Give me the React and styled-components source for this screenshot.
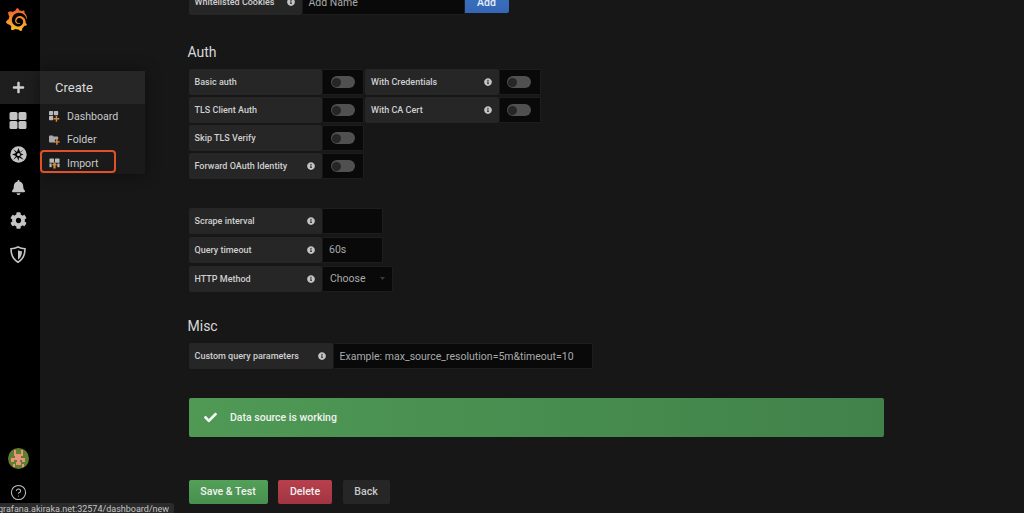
import * as React from "react";
import styled, { createGlobalStyle } from "styled-components";
import { SiGrafana } from "react-icons/si";
import { FaBell, FaCheck, FaCog, FaInfoCircle, FaPlus } from "react-icons/fa";
import { CircleHelp } from "lucide-react";

const GlobalStyle = createGlobalStyle`
	html, body {
		margin: 0;
		height: 100%;
		background: #171717;
		overflow: hidden;
	}
	body {
		font-family: Roboto, "Liberation Sans", sans-serif;
		color: #d8d9da;
	}
`;

const Page = styled.div`
	position: relative;
	display: flex;
	width: 1024px;
	height: 513px;
	overflow: hidden;
`;

const Sidebar = styled.nav`
	flex: 0 0 40px;
	display: flex;
	flex-direction: column;
	align-items: stretch;
	padding-bottom: 4px;
	box-sizing: border-box;
	background: #000;
	color: #c4c4c5;
`;

const LogoSlot = styled.div`
	display: flex;
	justify-content: center;
	height: 71px;
	padding: 8px 8px 0 0;
	box-sizing: border-box;
`;

const NavItem = styled.div`
	display: flex;
	align-items: center;
	justify-content: center;
	height: ${(p) => p.$height || 33.4}px;
	padding-right: 4px;
	background: ${(p) => (p.$active ? "#1e1e1e" : "transparent")};
	color: ${(p) => (p.$active ? "#d0d0d0" : "#c4c4c5")};
`;

const SidebarSpacer = styled.div`
	flex: 1;
`;

const Flyout = styled.div`
	position: absolute;
	left: 40px;
	top: 71px;
	width: 105px;
	height: 103px;
	background: #1a1a1a;
	box-shadow: 0 0 14px rgba(0, 0, 0, 0.45);
`;

const FlyoutHeader = styled.div`
	display: flex;
	align-items: center;
	height: 33px;
	padding-left: 15px;
	background: #262626;
	font-size: 13px;
	color: #d8d9da;
`;

const FlyoutList = styled.div`
	display: flex;
	flex-direction: column;
	padding-top: 1px;
`;

const FlyoutItem = styled.div`
	display: flex;
	align-items: center;
	gap: 7px;
	height: 23.3px;
	padding-left: 9px;
	font-size: 10.6px;
	color: #c8c9ca;
`;

const Highlight = styled.div`
	position: absolute;
	left: 40px;
	top: 150px;
	width: 76px;
	height: 23px;
	box-sizing: border-box;
	border: 2px solid #e0512a;
	border-radius: 4px;
`;

const Main = styled.main`
	flex: 1;
	min-width: 0;
	padding: 0 0 0 148.5px;
`;

const Row = styled.div`
	display: flex;
	gap: 1px;
	height: 26px;
	margin-bottom: ${(p) => p.$pitch ?? 2}px;
`;

const TopRow = styled(Row)`
	margin-top: -11px;
`;

const Label = styled.div`
	display: flex;
	align-items: center;
	justify-content: space-between;
	box-sizing: border-box;
	width: ${(p) => p.$width || 133.5}px;
	padding: 0 6px;
	background: #262626;
	border-radius: 2px;
	font-size: 9px;
	font-weight: 500;
	color: #cfd0d1;
	white-space: nowrap;
`;

const InfoIcon = styled(FaInfoCircle)`
	width: 8px;
	height: 8px;
	margin-right: 1px;
	color: #c4c4c5;
`;

const Field = styled.div`
	display: flex;
	align-items: center;
	justify-content: space-between;
	box-sizing: border-box;
	width: ${(p) => p.$width}px;
	padding: 0 ${(p) => p.$pad ?? 6}px;
	background: #090909;
	border: 1px solid #1e1e1e;
	border-left: 0;
	border-radius: 0 2px 2px 0;
	font-size: 10.5px;
	color: #a8a9aa;
	white-space: nowrap;
`;

const ToggleCell = styled.div`
	display: flex;
	align-items: center;
	justify-content: center;
	width: 41px;
	padding-right: ${(p) => p.$inset || 1}px;
	box-sizing: border-box;
	background: #090909;
	border: 1px solid #1e1e1e;
	border-left: 0;
	border-radius: 0 2px 2px 0;
`;

const ToggleTrack = styled.div`
	display: flex;
	align-items: center;
	width: 24px;
	height: 12px;
	padding: 0 1.5px;
	box-sizing: border-box;
	border-radius: 6px;
	background: #505050;
`;

const ToggleKnob = styled.div`
	width: 9px;
	height: 9px;
	border-radius: 50%;
	background: #262626;
`;

const AddButton = styled.button`
	width: 44px;
	height: 24px;
	margin-left: -1px;
	padding: 2px 0 0;
	border: 0;
	border-radius: 0 2px 2px 0;
	background: linear-gradient(#3c73c4, #3467b5);
	font: 500 10.5px Roboto, sans-serif;
	color: #e8eefa;
`;

const Heading = styled.h3`
	margin: ${(p) => p.$top}px 0 ${(p) => p.$bottom}px -1px;
	font-size: 14px;
	font-weight: 400;
	line-height: 17px;
	color: #d8d9da;
`;

const Group = styled.div`
	margin-top: ${(p) => p.$top}px;
`;

const Alert = styled.div`
	display: flex;
	align-items: center;
	gap: 13.5px;
	box-sizing: border-box;
	width: 695px;
	height: 39px;
	margin-top: 28.5px;
	padding-left: 15px;
	border-radius: 2px;
	background: linear-gradient(90deg, #4f9955, #41824a);
	font-size: 10.5px;
	font-weight: 500;
	color: #f0f2f0;
`;

const Buttons = styled.div`
	display: flex;
	gap: 10.5px;
	margin-top: 43px;
`;

const ActionButton = styled.button`
	width: ${(p) => p.$width}px;
	height: 24px;
	padding: 0;
	border: 0;
	border-radius: 2px;
	background: ${(p) => p.$bg};
	font: 500 10.6px Roboto, sans-serif;
	color: ${(p) => p.$color || "#f2f2f2"};
`;

const StatusBar = styled.div`
	position: absolute;
	left: 0;
	bottom: 0;
	width: 174px;
	height: 10px;
	overflow: hidden;
	background: #2b2b2b;
	border-radius: 0 3px 0 0;
	font-size: 9px;
	line-height: 12px;
	white-space: nowrap;
	color: #c4c4c5;
`;

const StatusText = styled.span`
	display: block;
	margin-left: -2px;
`;

const GridIcon = () => (
	<svg width="18" height="17" viewBox="0 0 18 17" fill="currentColor">
		<rect x="0.5" y="0" width="8" height="8" rx="1.6" />
		<rect x="9.5" y="0" width="8" height="8" rx="1.6" />
		<rect x="0.5" y="9" width="8" height="8" rx="1.6" />
		<rect x="9.5" y="9" width="8" height="8" rx="1.6" />
	</svg>
);

const CompassIcon = () => (
	<svg width="17" height="17" viewBox="0 0 17 17">
		<circle cx="8.5" cy="8.5" r="8.2" fill="currentColor" />
		<path
			d="M13.8 3.2L10 7l3.4 1.5L10 10l3.8 3.8L9 11.5 8.5 15 7 11 3.2 13.8 6 10 2 8.5 6 7 3.2 3.2 7 6l1.5-4L10 6z"
			fill="#000"
		/>
		<circle cx="8.5" cy="8.5" r="1.6" fill="currentColor" />
	</svg>
);

const ShieldIcon = () => (
	<svg width="16" height="17" viewBox="0 0 16 17" fill="none">
		<path
			d="M8 1C5.6 2.2 3.4 2.7 1 2.8c0 5.6 1.8 10.4 7 13.4 5.2-3 7-7.8 7-13.4C12.6 2.7 10.4 2.2 8 1z"
			stroke="currentColor"
			strokeWidth="1.6"
		/>
		<path d="M8 4.2c1.3.6 2.6.9 4 1 0 3.4-1 6.4-4 8.4z" fill="currentColor" />
	</svg>
);

const DashboardGlyph = () => (
	<svg width="11" height="11" viewBox="0 0 12 12">
		<rect x="0" y="0" width="4.6" height="4.6" rx="0.8" fill="#b9b9b9" />
		<rect x="5.4" y="0" width="4.6" height="4.6" rx="0.8" fill="#b9b9b9" />
		<rect x="0" y="5.4" width="4.6" height="4.6" rx="0.8" fill="#b9b9b9" />
		<path d="M7.3 5.5h1.6v2.2h2.3v1.6H8.9v2.4H7.3V9.3H5V7.7h2.3z" fill="#d98a3a" />
	</svg>
);

const FolderGlyph = () => (
	<svg width="11" height="11" viewBox="0 0 12 12">
		<path d="M0 2.5c0-.6.4-1 1-1h3l1 1.2h4c.6 0 1 .4 1 1V6H6.5v3.2H1c-.6 0-1-.4-1-1z" fill="#a9a9a9" />
		<path d="M7.8 5.7h1.6v2.1h2.3v1.6H9.4v2.3H7.8V9.4H5.6V7.8h2.2z" fill="#d98a3a" />
	</svg>
);

const ImportGlyph = () => (
	<svg width="11" height="11" viewBox="0 0 12 12">
		<rect x="0.5" y="0.5" width="5" height="4.6" rx="0.6" fill="#b9b9b9" />
		<rect x="6.5" y="0.5" width="5" height="4.6" rx="0.6" fill="#b9b9b9" />
		<rect x="0.5" y="6" width="2.4" height="4" fill="#b9b9b9" />
		<rect x="9.1" y="6" width="2.4" height="4" fill="#b9b9b9" />
		<path d="M6 4.6l3 3.2H7.2V11.4H4.8V7.8H3z" fill="#d98a3a" />
	</svg>
);

const Avatar = () => (
	<svg width="21" height="21" viewBox="0 0 21 21">
		<defs>
			<clipPath id="avatar-clip">
				<circle cx="10.5" cy="10.5" r="10.5" />
			</clipPath>
		</defs>
		<g clipPath="url(#avatar-clip)">
			<rect width="21" height="21" fill="#5f7f2e" />
			<path
				d="M6 2h2v4h5V2h2v6h-2v2h4v4h-3v-2h-2v2h-3v-2H6v2H3v-4h4V8H6zM8 14h5v3H8zM5 16h2v3H5zM14 16h2v3h-2z"
				fill="#e8937c"
			/>
		</g>
	</svg>
);

const Toggle = ({ inset }) => (
	<ToggleCell $inset={inset}>
		<ToggleTrack>
			<ToggleKnob />
		</ToggleTrack>
	</ToggleCell>
);

const menuItems = [
	{ name: "Dashboard", Glyph: DashboardGlyph },
	{ name: "Folder", Glyph: FolderGlyph },
	{ name: "Import", Glyph: ImportGlyph },
];

const App = () => (
	<Page>
		<GlobalStyle />
		<Sidebar>
			<LogoSlot>
				<svg width="0" height="0" style={{ position: "absolute" }}>
					<defs>
						<linearGradient id="logo-gradient" x1="0" y1="0" x2="0" y2="1">
							<stop offset="0" stopColor="#ee5a2c" />
							<stop offset="1" stopColor="#fbc02d" />
						</linearGradient>
					</defs>
				</svg>
				<SiGrafana size={23} style={{ fill: "url(#logo-gradient)" }} />
			</LogoSlot>
			<NavItem $active $height={33}>
				<FaPlus size={13} />
			</NavItem>
			<NavItem>
				<GridIcon />
			</NavItem>
			<NavItem>
				<CompassIcon />
			</NavItem>
			<NavItem>
				<FaBell size={15} />
			</NavItem>
			<NavItem>
				<FaCog size={17} />
			</NavItem>
			<NavItem>
				<ShieldIcon />
			</NavItem>
			<SidebarSpacer />
			<NavItem>
				<Avatar />
			</NavItem>
			<NavItem>
				<CircleHelp size={17} strokeWidth={1.5} />
			</NavItem>
		</Sidebar>

		<Flyout>
			<FlyoutHeader>Create</FlyoutHeader>
			<FlyoutList>
				{menuItems.map(({ name, Glyph }) => (
					<FlyoutItem key={name}>
						<Glyph />
						{name}
					</FlyoutItem>
				))}
			</FlyoutList>
		</Flyout>
		<Highlight />

		<Main>
			<TopRow>
				<Label $width={113}>
					Whitelisted Cookies
					<InfoIcon />
				</Label>
				<Field $width={162}>Add Name</Field>
				<AddButton>Add</AddButton>
			</TopRow>

			<Heading $top={29} $bottom={8}>
				Auth
			</Heading>
			<Row>
				<Label>Basic auth</Label>
				<Toggle />
				<Label>
					With Credentials
					<InfoIcon />
				</Label>
				<Toggle inset={2} />
			</Row>
			<Row>
				<Label>TLS Client Auth</Label>
				<Toggle />
				<Label>
					With CA Cert
					<InfoIcon />
				</Label>
				<Toggle inset={2} />
			</Row>
			<Row>
				<Label>Skip TLS Verify</Label>
				<Toggle />
			</Row>
			<Row>
				<Label>
					Forward OAuth Identity
					<InfoIcon />
				</Label>
				<Toggle />
			</Row>

			<Group $top={28.5}>
				<Row $pitch={3}>
					<Label>
						Scrape interval
						<InfoIcon />
					</Label>
					<Field $width={60} />
				</Row>
				<Row $pitch={3}>
					<Label>
						Query timeout
						<InfoIcon />
					</Label>
					<Field $width={60}>60s</Field>
				</Row>
				<Row>
					<Label>
						HTTP Method
						<InfoIcon />
					</Label>
					<Field $width={70} $pad={7}>
						Choose
						<svg width="5" height="3" viewBox="0 0 5 3">
							<path d="M0 0h5L2.5 3z" fill="#3a3a3a" />
						</svg>
					</Field>
				</Row>
			</Group>

			<Heading $top={26} $bottom={8.5}>
				Misc
			</Heading>
			<Row>
				<Label $width={144}>
					Custom query parameters
					<InfoIcon />
				</Label>
				<Field $width={259}>Example: max_source_resolution=5m&amp;timeout=10</Field>
			</Row>

			<Alert>
				<FaCheck size={13} color="#f4f6f4" />
				Data source is working
			</Alert>

			<Buttons>
				<ActionButton $width={79} $bg="linear-gradient(#53a058, #488f4e)">
					Save &amp; Test
				</ActionButton>
				<ActionButton $width={54} $bg="linear-gradient(#b8404e, #a23542)">
					Delete
				</ActionButton>
				<ActionButton $width={47} $bg="#262626" $color="#c8c9ca">
					Back
				</ActionButton>
			</Buttons>
		</Main>

		<StatusBar>
			<StatusText>grafana.akiraka.net:32574/dashboard/new</StatusText>
		</StatusBar>
	</Page>
);

export default App;
